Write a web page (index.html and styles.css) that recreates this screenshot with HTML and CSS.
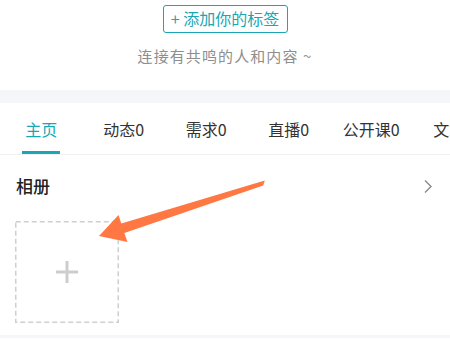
FILE: index.html
```html
<!DOCTYPE html>
<html lang="zh">
<head>
<meta charset="utf-8">
<link rel="stylesheet" href="styles.css">
</head>
<body>
<div class="page">
  <header class="intro">
    <div class="tag-btn">+ 添加你的标签</div>
    <p class="slogan">连接有共鸣的人和内容 ~</p>
  </header>
  <div class="band"></div>
  <nav class="tabs">
    <div class="tab active"><span class="label">主页</span></div>
    <div class="tab"><span class="label">动态0</span></div>
    <div class="tab"><span class="label">需求0</span></div>
    <div class="tab"><span class="label">直播0</span></div>
    <div class="tab"><span class="label">公开课0</span></div>
    <div class="tab"><span class="label">文章0</span></div>
  </nav>
  <section class="album">
    <div class="album-head">
      <h2 class="album-title">相册</h2>
      <svg class="chev" width="10" height="15" viewBox="0 0 10 15"><polyline points="2,1.5 8,7.5 2,13.5" fill="none" stroke="#8a8a8a" stroke-width="1.4"/></svg>
    </div>
    <div class="add-box">
      <svg class="dash" width="104" height="102" viewBox="0 0 104 102"><rect x="0.75" y="0.75" width="102.5" height="100.5" fill="none" stroke="#cfcfcf" stroke-width="1.5" stroke-dasharray="5 3"/></svg>
      <svg class="plus" width="22" height="22" viewBox="0 0 22 22"><path d="M11 0V22M0 11H22" stroke="#cdcdcd" stroke-width="3"/></svg>
    </div>
  </section>
  <div class="band bottom"></div>
  <svg class="arrow" width="450" height="339" viewBox="0 0 450 339"><polygon points="264.8,180.6 121.3,223.5 118.5,215 99,236 127.5,242 124.3,233.1 263.2,185.6" fill="#ff7743"/></svg>
</div>
</body>
</html>
```
FILE: styles.css
```css
* { box-sizing: border-box; }
html, body { margin: 0; padding: 0; background: #fff; }
body {
  font-family: "Noto Sans CJK SC", "Noto Sans", sans-serif;
  color: #333;
  width: 450px;
  height: 339px;
  overflow: hidden;
}
.page { position: relative; width: 450px; height: 339px; overflow: hidden; }
.intro {
  height: 90px;
  display: flex;
  flex-direction: column;
  align-items: center;
  padding-top: 5px;
}
.tag-btn {
  height: 28px;
  width: 125px;
  border: 1.5px solid #1aa7b4;
  border-radius: 3px;
  color: #1aa7b4;
  font-size: 16px;
  line-height: 25px;
  text-align: center;
  white-space: nowrap;
}
.slogan {
  margin: 12px 0 0;
  font-size: 15px;
  line-height: 21px;
  letter-spacing: 1.1px;
  color: #8e8e8e;
}
.band { height: 13px; background: #f5f6fa; }
.band.bottom { height: 3px; }
.tabs {
  display: flex;
  height: 52px;
  border-bottom: 1px solid #f0f0f0;
  white-space: nowrap;
}
.tab {
  flex: 0 0 82.5px;
  display: flex;
  justify-content: center;
  align-items: flex-end;
}
.label {
  font-size: 16px;
  line-height: 22px;
  padding: 0 3px 11px;
  border-bottom: 3px solid transparent;
  color: #333;
}
.tab.active .label { color: #1aa7b4; border-bottom-color: #1aa7b4; }
.album { padding: 19px 17px 12px 15px; height: 180px; }
.album-head {
  display: flex;
  justify-content: space-between;
  align-items: center;
  height: 24px;
}
.album-title {
  margin: 0 0 0 1px;
  font-size: 17px;
  font-weight: 500;
  line-height: 24px;
  color: #222;
}
.chev { display: block; margin-top: 0; }
.add-box {
  position: relative;
  margin-top: 23px;
  width: 104px;
  height: 102px;
  display: flex;
  align-items: center;
  justify-content: center;
}
.dash { position: absolute; left: 0; top: 0; }
.plus { display: block; margin-top: 0; }
.arrow { position: absolute; left: 0; top: 0; pointer-events: none; }
```
